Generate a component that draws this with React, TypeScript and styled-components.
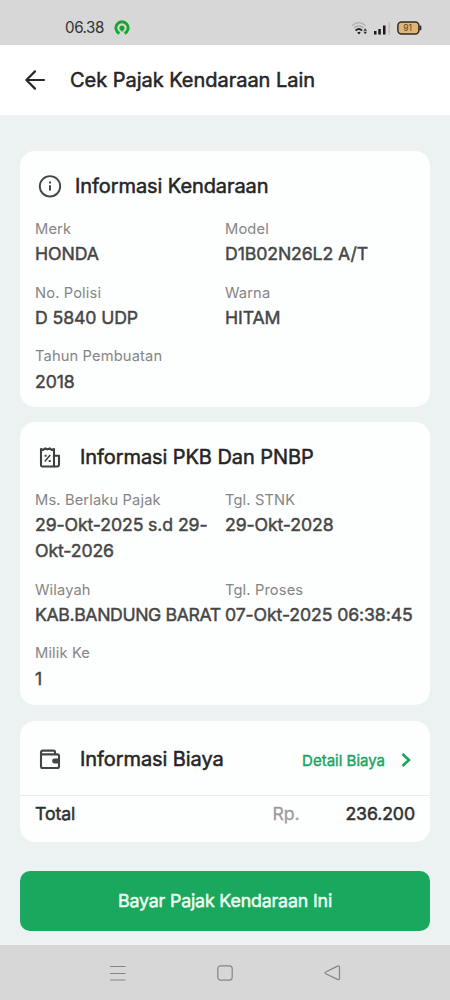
import React from "react";
import styled, { createGlobalStyle } from "styled-components";

const GlobalStyle = createGlobalStyle`
  * { box-sizing: border-box; }
  body { margin: 0; background: #ecf1f2; font-family: Inter, "Liberation Sans", sans-serif; }
`;

const Screen = styled.div`
  display: flex;
  flex-direction: column;
  width: 450px;
  height: 1000px;
  background: #ecf1f2;
  overflow: hidden;
`;

const StatusBar = styled.header`
  display: flex;
  align-items: center;
  height: 45px;
  padding: 11px 28px 0 65px;
  background: #d7d7d7;
`;

const Clock = styled.span`
  width: 49px;
  font-size: 15.2px;
  line-height: 20px;
  letter-spacing: -0.45px;
  color: #333;
`;

const StatusIcons = styled.div`
  display: flex;
  align-items: center;
  gap: 6px;
  margin-left: auto;
`;

const AppBar = styled.div`
  display: flex;
  align-items: center;
  gap: 22px;
  height: 70px;
  padding-left: 23px;
  background: #fff;
`;

const AppTitle = styled.h1`
  margin: 0;
  font-size: 20px;
  font-weight: 400;
  letter-spacing: -0.03px;
  color: #252525;
  -webkit-text-stroke: 0.5px #252525;
`;

const Content = styled.main`
  flex: 1;
  display: flex;
  flex-direction: column;
  padding: 36px 20px 0;
`;

const Card = styled.section<{ $height: number; $gap: number }>`
  height: ${(p) => p.$height}px;
  margin-bottom: ${(p) => p.$gap}px;
  border-radius: 15px;
  background: #fdfefe;
`;

const CardHead = styled.div<{ $height: number; $gap: number }>`
  display: flex;
  align-items: center;
  gap: ${(p) => p.$gap}px;
  height: ${(p) => p.$height}px;
  padding: 2px 15px 0 18px;
`;

const CardTitle = styled.h2`
  margin: 0;
  font-size: 20px;
  font-weight: 400;
  letter-spacing: -0.08px;
  color: #252525;
  -webkit-text-stroke: 0.5px #252525;
`;

const Fields = styled.dl`
  display: grid;
  grid-template-columns: 190px 190px;
  row-gap: 14.6px;
  margin: 0;
  padding-left: 15px;
`;

const Label = styled.dt`
  font-size: 14.7px;
  line-height: 22px;
  letter-spacing: 0.13px;
  color: #858585;
`;

const Value = styled.dd<{ $tight?: boolean }>`
  margin: 1.4px 0 -0.4px;
  font-size: 17.7px;
  font-weight: 400;
  line-height: 26px;
  letter-spacing: ${(p) => (p.$tight ? -0.4 : -0.12)}px;
  white-space: pre;
  color: #464646;
  -webkit-text-stroke: 0.45px #464646;
`;

const DetailLink = styled.a`
  display: flex;
  align-items: center;
  gap: 15px;
  margin-left: auto;
  padding: 2px 3px 0 0;
  font-size: 15px;
  font-weight: 400;
  color: #1aa260;
  -webkit-text-stroke: 0.4px #1aa260;
`;

const TotalRow = styled.div`
  display: flex;
  align-items: center;
  height: 38px;
  padding: 0 15px 2px;
  border-top: 1px solid #e9eced;
  font-size: 17.7px;
  font-weight: 400;
  letter-spacing: -0.1px;
  color: #303030;
  -webkit-text-stroke: 0.5px currentColor;
`;

const Currency = styled.span`
  margin-left: auto;
  width: 73px;
  color: #9c9c9c;
  -webkit-text-stroke-width: 0.3px;
`;

const PayButton = styled.button`
  height: 60px;
  margin: 0;
  padding: 0 0 2px;
  border: 0;
  border-radius: 10px;
  background: #19a85d;
  font: 400 17.8px Inter, "Liberation Sans", sans-serif;
  letter-spacing: -0.16px;
  color: #effff4;
  -webkit-text-stroke: 0.5px #effff4;
`;

const NavBar = styled.nav`
  display: flex;
  justify-content: center;
  align-items: center;
  gap: 85px;
  height: 55px;
  background: #d7d7d7;
`;

type FieldData = { label: string; value: string; tight?: boolean };

const vehicle: FieldData[] = [
  { label: "Merk", value: "HONDA" },
  { label: "Model", value: "D1B02N26L2 A/T" },
  { label: "No. Polisi", value: "D 5840 UDP" },
  { label: "Warna", value: "HITAM" },
  { label: "Tahun Pembuatan", value: "2018" },
];

const tax: FieldData[] = [
  { label: "Ms. Berlaku Pajak", value: "29-Okt-2025 s.d 29-\nOkt-2026" },
  { label: "Tgl. STNK", value: "29-Okt-2028" },
  { label: "Wilayah", value: "KAB.BANDUNG BARAT", tight: true },
  { label: "Tgl. Proses", value: "07-Okt-2025 06:38:45" },
  { label: "Milik Ke", value: "1" },
];

const FieldList = ({ items }: { items: FieldData[] }) => (
  <Fields>
    {items.map(({ label, value, tight }) => (
      <div key={label}>
        <Label>{label}</Label>
        <Value $tight={tight}>{value}</Value>
      </div>
    ))}
  </Fields>
);

const GojekIcon = () => (
  <svg width="16" height="16" viewBox="0 0 16 16" fill="none">
    <path d="M5.4 13.4A6.1 6.1 0 1 1 10.6 13.4" stroke="#12a62c" strokeWidth="2.9" />
    <circle cx="8" cy="8" r="2.6" fill="#12a62c" />
    <path d="M8 9v2.6" stroke="#12a62c" strokeWidth="1.6" />
  </svg>
);

const WifiIcon = () => (
  <svg width="17" height="14" viewBox="0 0 17 14" fill="none">
    <path d="M1 4.6Q8 -1.2 14.5 4.6" stroke="#b0b0b0" strokeWidth="1.3" />
    <path d="M3 7Q8 2.8 12.6 7" stroke="#a5a5a5" strokeWidth="1.3" />
    <path d="M4.6 9.6Q8 6.6 11 9.6" stroke="#222" strokeWidth="1.9" />
    <path d="M6.2 11.4L8 13.4l1.7-2Q8 10.2 6.2 11.4z" fill="#222" />
    <path d="M12.4 9.8L14.2 7.3 16 9.8zM12.4 10.7L14.2 13.2 16 10.7z" fill="#333" />
  </svg>
);

const SignalIcon = () => (
  <svg width="17" height="13" viewBox="0 0 17 13">
    <path d="M0 9h2.5v3.5H0zM4.3 7h2.5v5.5H4.3zM9 3.5h2.5v9H9z" fill="#171717" />
    <path d="M14.5 0h1.2v12.5h-1.2z" fill="#b4b4b4" />
  </svg>
);

const BatteryIcon = () => (
  <svg width="25" height="14" viewBox="0 0 25 14">
    <rect x="0.9" y="0.9" width="21" height="12" rx="3.6" fill="#dfb477" stroke="#302b25" strokeWidth="1.5" />
    <path d="M23.4 4.6v4.6" stroke="#302b25" strokeWidth="1.8" />
    <text x="10.5" y="9.9" textAnchor="middle" fontSize="8.5" fill="#5b431f" fontFamily="Inter, sans-serif">91</text>
  </svg>
);

const BackIcon = () => (
  <svg width="25" height="24" viewBox="0 0 25 24" fill="none" stroke="#292929" strokeWidth="2.2" strokeLinecap="round" strokeLinejoin="round">
    <path d="M21 12H4M12 3.4L3.4 12 12 20.6" />
  </svg>
);

const InfoIcon = () => (
  <svg width="24" height="24" viewBox="0 0 24 24" fill="none">
    <circle cx="12" cy="12.3" r="10.2" stroke="#454545" strokeWidth="1.9" />
    <path d="M12 11.3v5.2M12 7.5v2" stroke="#454545" strokeWidth="2" />
  </svg>
);

const TaxIcon = () => (
  <svg width="24" height="24" viewBox="0 0 24 24" fill="none" stroke="#3f3f3f">
    <path d="M16 21.5H4.4Q3 21.5 3 19.9V4L5.2 5 7.3 3.4 9.5 4.4 11.700 3.400 13.800 5 16 4z" strokeWidth="2.1" strokeLinejoin="round" />
    <path d="M16 10.7h5V19.500q0 2-2 2H16" strokeWidth="2.1" strokeLinejoin="round" />
    <path d="M6.8 16.500L12.200 10.100" strokeWidth="1.5" />
    <path d="M6.6 9.800h2v2h-2zM10.700 14.900h2v2h-2z" fill="#3f3f3f" stroke="none" />
  </svg>
);

const WalletIcon = () => (
  <svg width="24" height="24" viewBox="0 0 24 24" fill="none" stroke="#454545" strokeWidth="2.1" strokeLinejoin="round">
    <path d="M17 7.4V5Q17 3.600 15.600 3.600H4.800Q3 3.600 3 5.400V19.200q0 1.800 1.800 1.800H19.200q1.800 0 1.800-1.800V9.200Q21 7.400 19.200 7.400H3" />
    <path d="M21.500 11.600H16.500a2.400 2.400 0 0 0 0 4.800H21.500z" fill="#454545" stroke="none" />
  </svg>
);

const ChevronIcon = () => (
  <svg width="12" height="16" viewBox="0 0 12 16" fill="none">
    <path d="M2.500 2L9 8l-6.500 6" stroke="#1aa260" strokeWidth="2.500" />
  </svg>
);

const MenuIcon = () => (
  <svg width="22" height="22" viewBox="0 0 22 22" stroke="#858585" strokeWidth="1.2">
    <path d="M3 4.500h15.500M3 11.500h15.500M3 18h15.500" />
  </svg>
);

const HomeIcon = () => (
  <svg width="22" height="22" viewBox="0 0 22 22" fill="none" stroke="#858585" strokeWidth="1.2">
    <rect x="3.800" y="3.800" width="14.400" height="14.400" rx="3" />
  </svg>
);

const ReturnIcon = () => (
  <svg width="22" height="22" viewBox="0 0 22 22" fill="none" stroke="#858585" strokeWidth="1.2" strokeLinejoin="round">
    <path d="M4.700 10L16.500 4.100Q18.500 3.400 18.500 5.200V16.200Q18.500 18.300 16.500 17.400L4.700 11.700Q3.300 10.900 4.700 10z" />
  </svg>
);

export default function App() {
  return (
    <Screen>
      <GlobalStyle />
      <StatusBar>
        <Clock>06.38</Clock>
        <GojekIcon />
        <StatusIcons>
          <WifiIcon />
          <SignalIcon />
          <BatteryIcon />
        </StatusIcons>
      </StatusBar>
      <AppBar>
        <BackIcon />
        <AppTitle>Cek Pajak Kendaraan Lain</AppTitle>
      </AppBar>
      <Content>
        <Card $height={256} $gap={15}>
          <CardHead $height={67} $gap={13}>
            <InfoIcon />
            <CardTitle>Informasi Kendaraan</CardTitle>
          </CardHead>
          <FieldList items={vehicle} />
        </Card>
        <Card $height={283} $gap={16}>
          <CardHead $height={67} $gap={18}>
            <TaxIcon />
            <CardTitle>Informasi PKB Dan PNBP</CardTitle>
          </CardHead>
          <FieldList items={tax} />
        </Card>
        <Card $height={121} $gap={29}>
          <CardHead $height={74} $gap={18}>
            <WalletIcon />
            <CardTitle>Informasi Biaya</CardTitle>
            <DetailLink>
              Detail Biaya
              <ChevronIcon />
            </DetailLink>
          </CardHead>
          <TotalRow>
            <span>Total</span>
            <Currency>Rp.</Currency>
            <span>236.200</span>
          </TotalRow>
        </Card>
        <PayButton>Bayar Pajak Kendaraan Ini</PayButton>
      </Content>
      <NavBar>
        <MenuIcon />
        <HomeIcon />
        <ReturnIcon />
      </NavBar>
    </Screen>
  );
}
